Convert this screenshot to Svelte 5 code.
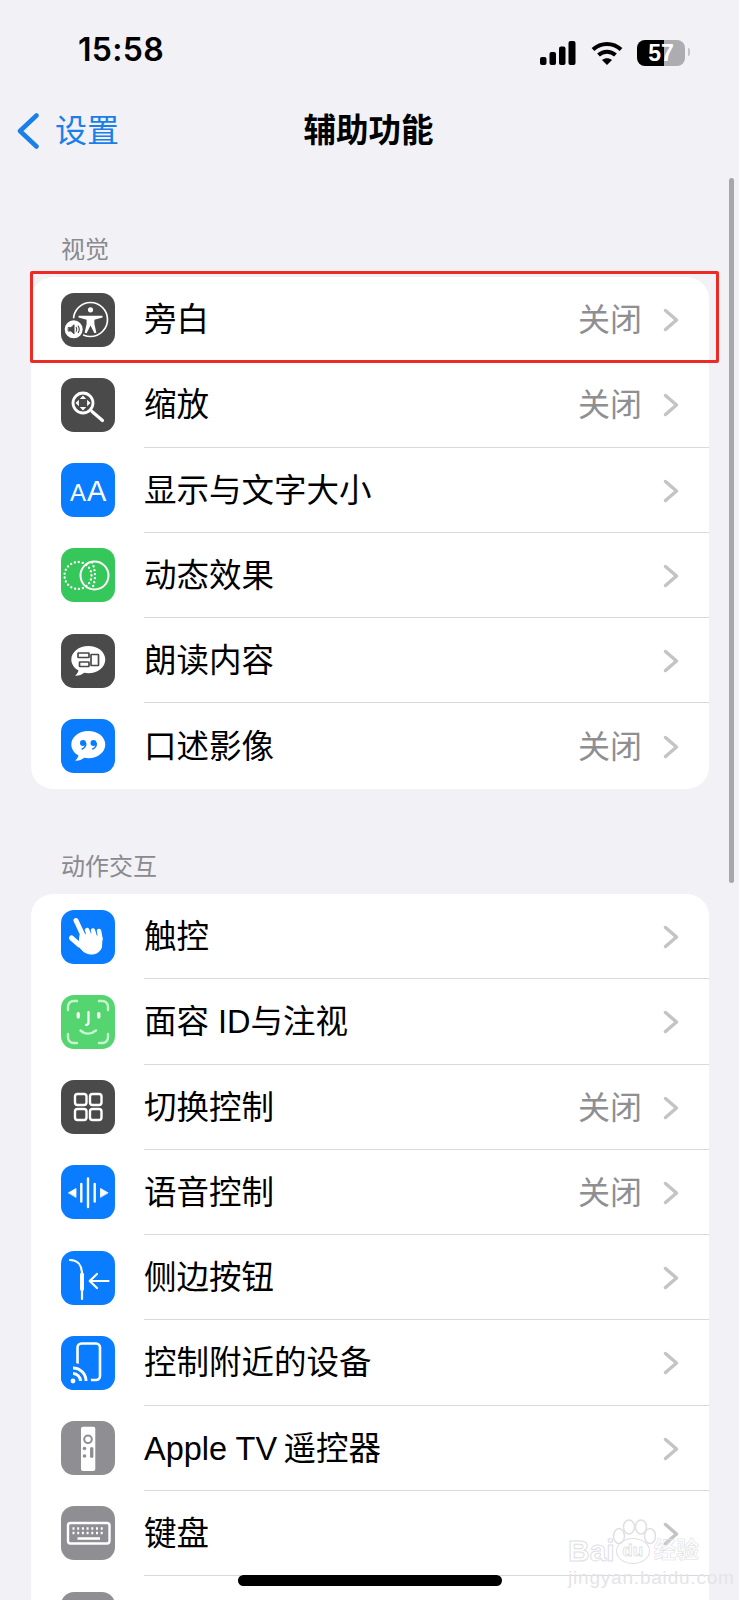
<script>
  const visionRows = [
    { icon: 'voiceover', bg: 'dark', label: '旁白', value: '关闭' },
    { icon: 'zoom', bg: 'dark', label: '缩放', value: '关闭' },
    { icon: 'text', bg: 'blue', label: '显示与文字大小' },
    { icon: 'motion', bg: 'green', label: '动态效果' },
    { icon: 'speech', bg: 'dark', label: '朗读内容' },
    { icon: 'describe', bg: 'blue', label: '口述影像', value: '关闭' }
  ];

  const interactionRows = [
    { icon: 'touch', bg: 'blue', label: '触控' },
    { icon: 'face', bg: 'lime', label: '面容 ID与注视' },
    { icon: 'switch', bg: 'dark', label: '切换控制', value: '关闭' },
    { icon: 'voice', bg: 'blue', label: '语音控制', value: '关闭' },
    { icon: 'side', bg: 'blue', label: '侧边按钮' },
    { icon: 'nearby', bg: 'blue', label: '控制附近的设备' },
    { icon: 'remote', bg: 'gray', label: 'Apple TV\u2009遥控器' },
    { icon: 'keyboard', bg: 'gray', label: '键盘' },
    { icon: '', bg: 'gray', label: '' }
  ];

  const sections = [
    { title: '视觉', rows: visionRows },
    { title: '动作交互', rows: interactionRows }
  ];
</script>

{#snippet glyph(name)}
  <svg viewBox="0 0 54 54" width="54" height="54" fill="none" stroke="#fff" stroke-linecap="round" stroke-linejoin="round">
    {#if name === 'voiceover'}
      <circle cx="29.5" cy="26.5" r="17" stroke-width="1.7" />
      <circle cx="29.5" cy="16.8" r="2.6" fill="#fff" stroke="none" />
      <path d="M17.5 22.8L41.5 22.8 41.5 24.6 33.4 26.8 33.4 31 35.4 39.8 33.4 40.2 29.5 32.5 25.6 40.2 23.6 39.8 25.6 31 25.6 26.8 17.5 24.6z" fill="#fff" stroke="none" />
      <circle cx="12.7" cy="36.3" r="10" fill="#fff" stroke="#4a4a4a" stroke-width="2" />
      <path d="M7.5 34.5h2.4l3.2-2.8v9.2l-3.2-2.8H7.5z" fill="#4a4a4a" stroke="#4a4a4a" stroke-width="0.8" />
      <path d="M15.2 34.400c.8 1.200.8 2.600 0 3.800M17.200 33c1.300 2 1.300 4.600 0 6.600" stroke="#4a4a4a" stroke-width="1.100" />
    {:else if name === 'zoom'}
      <circle cx="22" cy="25" r="10" stroke-width="2.800" />
      <path d="M31 33.500l10.500 9" stroke-width="3.200" />
      <path d="M22 17.500l3.200 3.400h-6.400zM22 32.500l3.200-3.400h-6.400zM14.500 25l3.400-3.200v6.400zM29.500 25l-3.400-3.200v6.400z" fill="#fff" stroke="none" />
    {:else if name === 'text'}
      <text x="9" y="38" class="aa small">A</text>
      <text x="26" y="38" class="aa big">A</text>
    {:else if name === 'motion'}
      <circle cx="17" cy="27.500" r="13.500" stroke-width="2.300" stroke-dasharray="0.1 3.900" />
      <circle cx="33.500" cy="27.500" r="14" stroke-width="2" />
      <path d="M31 14.500c4 8 4 18 0 26" stroke-width="2.300" stroke-dasharray="0.1 3.900" />
    {:else if name === 'speech'}
      <path d="M27.300 12c-9.400 0-17 6-17 13.500 0 4.600 2.800 8.600 7.200 11-.6 2-1.700 3.800-3.300 5.300 3.400.2 6.500-.9 9-3 1.300.3 2.700.4 4.100.4 9.400 0 17-6 17-13.700S36.700 12 27.300 12z" fill="#fff" stroke="none" />
      <rect x="17" y="19" width="11" height="4.500" stroke="#4a4a4a" stroke-width="1.700" rx="0.5" />
      <rect x="18.500" y="28" width="9.500" height="4.500" stroke="#4a4a4a" stroke-width="1.700" rx="0.5" />
      <rect x="30" y="20.500" width="7.500" height="11" stroke="#4a4a4a" stroke-width="1.700" rx="0.5" />
    {:else if name === 'describe'}
      <path d="M27.300 12c-9.400 0-17 6-17 13.500 0 4.600 2.800 8.600 7.200 11-.6 2-1.700 3.800-3.300 5.300 3.400.2 6.500-.9 9-3 1.300.3 2.700.4 4.100.4 9.400 0 17-6 17-13.700S36.700 12 27.300 12z" fill="#fff" stroke="none" />
      <circle cx="22" cy="24" r="3" fill="#0a7cff" stroke="none" />
      <circle cx="32.500" cy="24" r="3" fill="#0a7cff" stroke="none" />
      <path d="M24.800 24.500c0 2.500-1.400 4.500-3.600 5.500M35.300 24.500c0 2.500-1.400 4.500-3.600 5.500" stroke="#0a7cff" stroke-width="1.500" />
    {:else if name === 'touch'}
      <path d="M15 10.500l7.500 16" stroke-width="5" />
      <path d="M26 20l3 7M32 20.500l2 7M38 21l1.500 8" stroke-width="4.500" />
      <path d="M10.500 28l8 7" stroke-width="5" />
      <path d="M19 25l-1 10c1.500 4.500 5 8 11 9 6 .5 10-2 11.500-7l.5-9-10-4z" fill="#fff" stroke="#fff" stroke-width="1" />
    {:else if name === 'face'}
      <g stroke="#c9f4d2" stroke-width="2.400">
        <path d="M7 15v-3.500A5.500 5.500 0 0 1 12.500 6H16M38 6h3.500A5.500 5.500 0 0 1 47 11.500V15M47 39v3.500a5.500 5.500 0 0 1-5.500 5.500H38M16 48h-3.500A5.500 5.500 0 0 1 7 42.500V39" />
      </g>
      <path d="M17.200 18.500v3.500M37.800 18.500v3.500" stroke-width="3.200" />
      <path d="M27.500 17v10.500c0 1.600-.9 2.300-2.500 2.300" stroke-width="2.200" />
      <path d="M19.500 35.500c4.500 4 10.500 4 15.500 0" stroke="#c9f4d2" stroke-width="2.400" />
    {:else if name === 'switch'}
      <g stroke-width="2.400">
        <rect x="14" y="14" width="11.500" height="11" rx="2.500" />
        <rect x="29" y="14" width="11.500" height="11" rx="2.500" />
        <rect x="14" y="29" width="11.500" height="11" rx="2.500" />
        <rect x="29" y="29" width="11.500" height="11" rx="2.500" />
      </g>
    {:else if name === 'voice'}
      <path d="M20.300 19v17.500M27 13.500v28.500M33.700 19v17.500" stroke-width="2.400" />
      <path d="M7.700 27.700L15 23.500v8.500zM46.800 27.700l-7.300-4.200v8.500z" fill="#fff" stroke="#fff" stroke-width="0.800" />
    {:else if name === 'side'}
      <path d="M9 9c7.500 0 12 5 12 14v25" stroke-width="2.200" />
      <path d="M21 23.500V38" stroke-width="4" />
      <path d="M47.500 30H29M36 23l-7.300 7 7.300 7" stroke-width="2.200" />
    {:else if name === 'nearby'}
      <rect x="16.500" y="7.500" width="22.500" height="36.500" rx="4" stroke-width="2.600" />
      <circle cx="12" cy="45" r="18" fill="#0a7cff" stroke="none" />
      <circle cx="12" cy="45" r="2.400" fill="#fff" stroke="none" />
      <path d="M12 37.500a7.500 7.500 0 0 1 7.500 7.500M12 32a13 13 0 0 1 13 13" stroke-width="3" stroke-linecap="butt" />
    {:else if name === 'remote'}
      <rect x="20" y="5.700" width="14.300" height="44.300" rx="2" fill="#fff" stroke="none" />
      <circle cx="27" cy="18.300" r="3.800" stroke="#8e8e93" stroke-width="2" />
      <circle cx="23.500" cy="27.500" r="1.800" fill="#8e8e93" stroke="none" />
      <circle cx="23.500" cy="35" r="1.800" fill="#8e8e93" stroke="none" />
      <rect x="29" y="26" width="3.400" height="11" rx="1.700" fill="#8e8e93" stroke="none" />
    {:else if name === 'keyboard'}
      <rect x="7" y="17" width="41.500" height="20.500" rx="2.500" stroke-width="2.400" />
      <path d="M11.500 22.500h32.500M11.500 27h32.500" stroke-width="2.400" stroke-dasharray="2 2.700" stroke-linecap="butt" />
      <path d="M16.500 32.500h22.500" stroke-width="2.400" stroke-linecap="butt" />
    {/if}
  </svg>
{/snippet}

<div class="screen">
  <header class="status">
    <span class="time">15:58</span>
    <div class="status-icons">
      <svg class="signal" viewBox="0 0 36 24" width="36" height="24" fill="#000">
        <rect x="0" y="16" width="6.500" height="8" rx="2" />
        <rect x="9.500" y="11" width="6.500" height="13" rx="2" />
        <rect x="19" y="5.500" width="6.500" height="18.500" rx="2" />
        <rect x="28.500" y="0" width="7" height="24" rx="2" />
      </svg>
      <svg class="wifi" viewBox="0 0 32 24" width="32" height="24" fill="none" stroke="#000" stroke-width="4">
        <path d="M2 8.500c8-7.500 20-7.500 28 0" />
        <path d="M7.500 14c5-4.500 12-4.500 17 0" />
        <path d="M11 19l5 5 5-5c-3-2.500-7-2.500-10 0z" fill="#000" stroke="none" />
      </svg>
      <div class="battery"><span>57</span></div>
      <i class="battery-cap"></i>
    </div>
  </header>

  <nav class="navbar">
    <div class="back">
      <svg viewBox="0 0 22 36" width="22" height="36" fill="none" stroke="#1a7fe8" stroke-width="4.500" stroke-linecap="round" stroke-linejoin="round">
        <path d="M19.500 2.500L3 18l16.500 15.500" />
      </svg>
      <span>设置</span>
    </div>
    <h1>辅助功能</h1>
  </nav>

  <main class="content">
    {#each sections as section}
      <section>
        <h2>{section.title}</h2>
        <ul class="card">
          {#each section.rows as row}
            <li class="row">
              <div class="icon {row.bg}">{@render glyph(row.icon)}</div>
              <div class="row-body">
                <span class="label">{row.label}</span>
                {#if row.value}<span class="value">{row.value}</span>{/if}
                {#if row.label}
                  <svg class="chevron" viewBox="0 0 16 24" width="16" height="24" fill="none" stroke="#c4c4c7" stroke-width="3.500" stroke-linecap="round" stroke-linejoin="round">
                    <path d="M2.500 2.500L13.500 12 2.500 21.500" />
                  </svg>
                {/if}
              </div>
            </li>
          {/each}
        </ul>
      </section>
    {/each}
  </main>

  <div class="scrollbar"></div>
  <div class="highlight"></div>

  <div class="watermark">
    <svg class="paw" viewBox="0 0 44 30" width="44" height="30" fill="none" stroke="#e0e0e4" stroke-width="1.500">
      <ellipse cx="7" cy="17" rx="5.500" ry="7.500" />
      <ellipse cx="17" cy="8" rx="5.500" ry="7" />
      <ellipse cx="29" cy="8" rx="5.500" ry="7" />
      <ellipse cx="38" cy="17" rx="5.500" ry="7.500" />
    </svg>
    <div class="mark-brand"><span>Bai</span><span class="du">du</span><span class="cn">经验</span></div>
    <div class="mark-url">jingyan.baidu.com</div>
  </div>

  <div class="home-indicator"></div>
</div>

<style>
  :global(body) {
    margin: 0;
    background: #f1f1f6;
  }

  .screen {
    position: relative;
    width: 739px;
    height: 1600px;
    overflow: hidden;
    background: #f1f1f6;
    color: #000;
    font-family: "Liberation Sans", "Noto Sans CJK SC", sans-serif;
  }

  .status {
    height: 90px;
    box-sizing: border-box;
    padding: 32px 54px 0 78px;
    display: flex;
    justify-content: space-between;
    align-items: flex-start;
  }

  .time {
    font-family: Inter, sans-serif;
    font-weight: 600;
    font-size: 32px;
    letter-spacing: 0.3px;
    line-height: 36px;
  }

  .status-icons {
    display: flex;
    align-items: center;
    gap: 15px;
    height: 34px;
    padding-top: 4px;
    position: relative;
  }

  .battery {
    width: 48px;
    height: 26px;
    margin-left: -1px;
    border-radius: 8px;
    background: linear-gradient(90deg, #000 57%, #adadb1 57%);
    color: #fff;
    display: flex;
    align-items: center;
    justify-content: center;
    font-family: "Liberation Sans", sans-serif;
    font-weight: 700;
    font-size: 23px;
  }

  .battery-cap {
    position: absolute;
    right: -5px;
    top: 16px;
    width: 2px;
    height: 8px;
    border-radius: 0 2px 2px 0;
    background: #c4c4c8;
  }

  .navbar {
    height: 82px;
    display: flex;
    align-items: center;
    justify-content: center;
    position: relative;
  }

  .navbar h1 {
    margin: 0 0 0 -2px;
    font-size: 32.5px;
    font-weight: 700;
    line-height: 44px;
  }

  .back {
    position: absolute;
    left: 17px;
    top: 23px;
    display: flex;
    align-items: center;
    gap: 16px;
    color: #1a7fe8;
    font-size: 32px;
    line-height: 36px;
  }

  .content {
    padding: 60.5px 30px 0 31px;
  }

  section + section {
    margin-top: 61px;
  }

  h2 {
    margin: 0 0 10.500px 30px;
    font-size: 24px;
    font-weight: 400;
    line-height: 34px;
    color: #8a8a8e;
  }

  .card {
    list-style: none;
    margin: 0;
    padding: 0;
    background: #fff;
    border-radius: 22px;
    overflow: hidden;
  }

  .row {
    height: 85.25px;
    display: flex;
    align-items: center;
    padding-left: 30px;
  }

  .icon {
    flex: none;
    width: 54px;
    height: 54px;
    border-radius: 13px;
    margin-right: 29px;
    overflow: hidden;
  }

  .icon svg {
    display: block;
  }

  .icon.dark { background: #4a4a4a; }
  .icon.blue { background: #0a7cff; }
  .icon.green { background: #35c75a; }
  .icon.lime { background: #55d56f; }
  .icon.gray { background: #8e8e93; }

  .aa {
    fill: #fff;
    stroke: none;
    font-family: "Liberation Sans", sans-serif;
  }

  .aa.small { font-size: 24px; }
  .aa.big { font-size: 29px; }

  .row-body {
    flex: 1;
    height: 100%;
    box-sizing: border-box;
    padding: 2px 30px 0 0;
    display: flex;
    align-items: center;
    border-bottom: 1.5px solid #d9d9dc;
  }

  .row:last-child .row-body {
    border-bottom: none;
  }

  .label {
    flex: 1;
    font-size: 32.5px;
    line-height: 44px;
  }

  .value {
    font-size: 32px;
    line-height: 44px;
    color: #8e8e93;
    margin-right: 21px;
  }

  .scrollbar {
    position: absolute;
    left: 729px;
    top: 178px;
    width: 5px;
    height: 705px;
    border-radius: 3px;
    background: #a6a6ab;
  }

  .highlight {
    position: absolute;
    left: 30px;
    top: 271px;
    width: 689px;
    height: 92px;
    box-sizing: border-box;
    border: 3px solid #ee2a24;
    border-radius: 2px;
  }

  .watermark {
    position: absolute;
    left: 568px;
    top: 1519px;
    width: 134px;
    color: transparent;
    white-space: nowrap;
  }

  .paw {
    position: absolute;
    left: 44px;
    top: 0;
  }

  .mark-brand {
    margin-top: 15px;
    display: flex;
    align-items: center;
    gap: 1px;
    font-size: 30px;
    line-height: 34px;
    font-weight: 700;
    -webkit-text-stroke: 1px #e0e0e4;
  }

  .mark-brand .du {
    flex: none;
    font-size: 17px;
    width: 34px;
    height: 26px;
    line-height: 23px;
    text-align: center;
    box-sizing: border-box;
    border: 1.5px solid #e0e0e4;
    border-radius: 50%;
    -webkit-text-stroke: 0.8px #e0e0e4;
  }

  .mark-brand .cn {
    flex: none;
    margin-left: 3px;
    font-size: 22.5px;
    -webkit-text-stroke: 0.6px #e0e0e4;
  }

  .mark-url {
    font-size: 19px;
    line-height: 20px;
    letter-spacing: 0.8px;
    color: #e4e4e8;
  }

  .home-indicator {
    position: absolute;
    left: 238px;
    top: 1575px;
    width: 264px;
    height: 11px;
    border-radius: 6px;
    background: #000;
  }
</style>
